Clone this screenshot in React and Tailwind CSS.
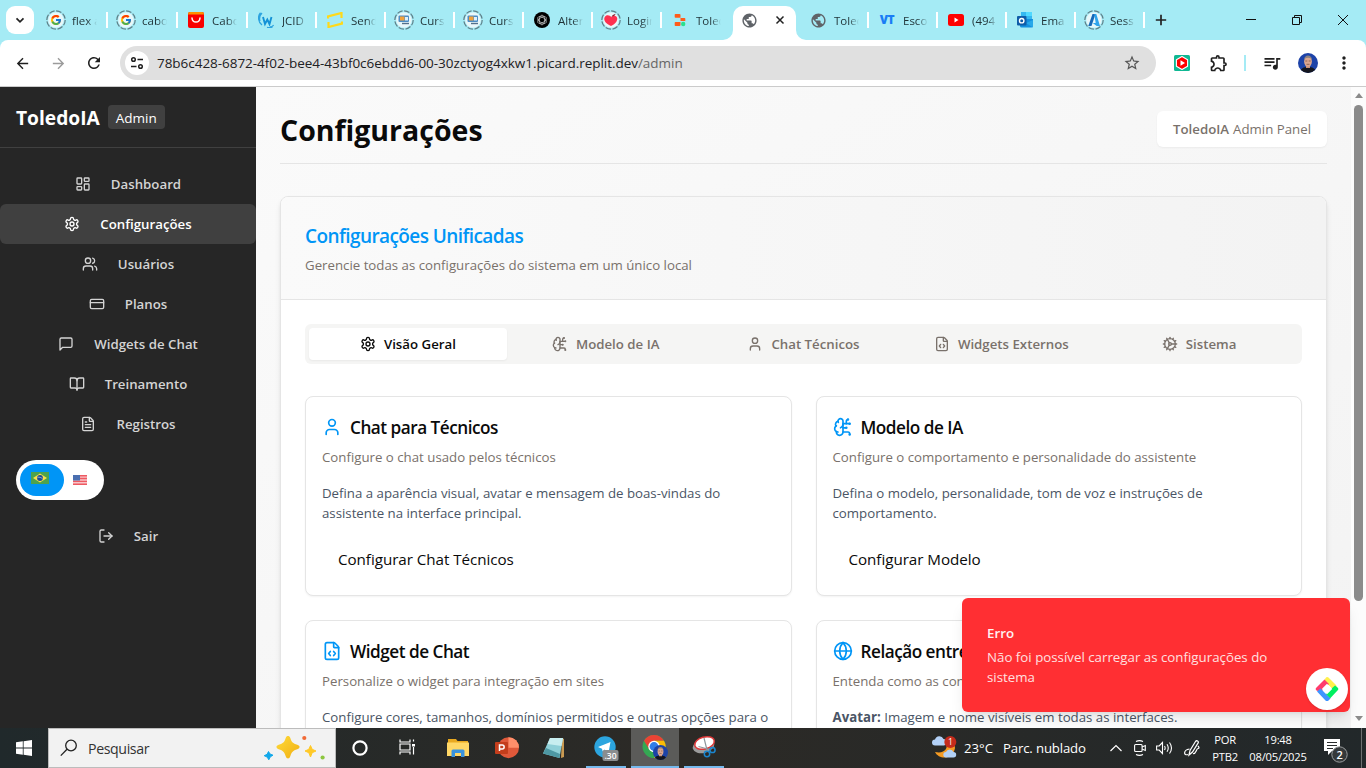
import React from "react";
import {
  LayoutDashboard, Users, CreditCard, BookOpen, FileText, LogOut,
  BrainCircuit, User, FileCode, Cog, Globe,
} from "lucide-react";
import {
  MdPublic, MdQueueMusic, MdOutlineExtension, MdRefresh, MdArrowBack,
  MdArrowForward, MdStarBorder, MdMoreVert,
} from "react-icons/md";
import { FcGoogle } from "react-icons/fc";

const UI = "font-['Open_Sans','Noto_Sans',sans-serif]";

/* ---------- icons ---------- */

function Stroke({ className = "", children }) {
  return (
    <svg viewBox="0 0 24 24" fill="none" stroke="currentColor" strokeWidth="2" strokeLinecap="round" strokeLinejoin="round" className={className}>
      {children}
    </svg>
  );
}

function Settings({ className }) {
  return (
    <Stroke className={className}>
      <path d="M12.22 2h-.44a2 2 0 0 0-2 2v.18a2 2 0 0 1-1 1.73l-.43.25a2 2 0 0 1-2 0l-.15-.08a2 2 0 0 0-2.73.73l-.22.38a2 2 0 0 0 .73 2.73l.15.1a2 2 0 0 1 1 1.72v.51a2 2 0 0 1-1 1.74l-.15.09a2 2 0 0 0-.73 2.73l.22.38a2 2 0 0 0 2.73.73l.15-.08a2 2 0 0 1 2 0l.43.25a2 2 0 0 1 1 1.73V20a2 2 0 0 0 2 2h.44a2 2 0 0 0 2-2v-.18a2 2 0 0 1 1-1.73l.43-.25a2 2 0 0 1 2 0l.15.08a2 2 0 0 0 2.73-.73l.22-.39a2 2 0 0 0-.73-2.73l-.15-.08a2 2 0 0 1-1-1.74v-.5a2 2 0 0 1 1-1.74l.15-.09a2 2 0 0 0 .73-2.73l-.22-.38a2 2 0 0 0-2.73-.73l-.15.08a2 2 0 0 1-2 0l-.43-.25a2 2 0 0 1-1-1.73V4a2 2 0 0 0-2-2z" />
      <circle cx="12" cy="12" r="3" />
    </Stroke>
  );
}

function MessageSquare({ className }) {
  return (
    <Stroke className={className}>
      <path d="M21 15a2 2 0 0 1-2 2H7l-4 4V5a2 2 0 0 1 2-2h14a2 2 0 0 1 2 2z" />
    </Stroke>
  );
}

function Ring({ children }) {
  return (
    <svg viewBox="0 0 20 20" className="size-5">
      <circle cx="10" cy="10" r="9.2" fill="none" stroke="#5f7f88" strokeWidth="1.2" strokeDasharray="5.6 1.6" />
      <circle cx="10" cy="10" r="7.8" fill="#e9f7fa" />
      {children}
    </svg>
  );
}

function GoogleTab() {
  return (
    <div className="grid size-5 place-items-center">
      <div className="col-start-1 row-start-1 size-5"><Ring /></div>
      <FcGoogle className="col-start-1 row-start-1 size-3" />
    </div>
  );
}

const CursIcon = () => (
  <Ring>
    <rect x="4.5" y="5.500" width="10.500" height="6.500" rx="1" fill="#4d8cc4" />
    <rect x="6" y="6.500" width="4.500" height="4" fill="#f3a23c" />
    <rect x="11" y="7" width="3" height="3.500" fill="#dff0fa" />
    <path d="M8 13.500h7" stroke="#54708a" strokeWidth="1.400" />
  </Ring>
);
const AliIcon = () => (
  <svg viewBox="0 0 16 16" className="size-4">
    <rect width="16" height="16" rx="2" fill="#f90000" />
    <path d="M0 2.500V2a2 2 0 0 1 2-2h12a2 2 0 0 1 2 2v.5z" fill="#ff9000" />
    <path d="M4 6c.4 5.400 7.600 5.400 8 0" fill="none" stroke="#fff" strokeWidth="1.500" strokeLinecap="round" />
  </svg>
);
const WIcon = () => (
  <svg viewBox="0 0 16 16" className="size-4">
    <path d="M4 13C0 10-.5 4 2.500.8M2 9C1 6 2 3 4 1M12 15c2 0 3-.8 3.600-2M9 15.500c2 .5 4 .2 5.500-.8" fill="none" stroke="#2ba3e0" strokeWidth="1.300" />
    <path d="M5 5 7 12l2.300-4.500L11.500 12l2-7" fill="none" stroke="#1391d6" strokeWidth="1.900" />
  </svg>
);
const SendIcon = () => (
  <svg viewBox="0 0 16 16" className="size-4">
    <path d="M1 6.500V4.500L14.500 1v5M15 9.500v2L1.500 15v-5" fill="none" stroke="#ffd91a" strokeWidth="2.200" />
  </svg>
);
const GptIcon = () => (
  <svg viewBox="0 0 16 16" className="size-4">
    <circle cx="8" cy="8" r="8" fill="#000" />
    <g fill="none" stroke="#ccc" strokeWidth=".7">
      <ellipse cx="8" cy="8" rx="2.600" ry="4.800" />
      <ellipse cx="8" cy="8" rx="2.600" ry="4.800" transform="rotate(60 8 8)" />
      <ellipse cx="8" cy="8" rx="2.600" ry="4.800" transform="rotate(120 8 8)" />
    </g>
  </svg>
);
const LogiIcon = () => (
  <Ring>
    <path d="M10 16C4.500 13.500 2.500 10.500 3.500 7.500 5 4.300 9 5 10.200 7.200 12 5 15.500 5.500 16.200 8c.5 3-2.200 6.500-6.200 8z" fill="#ff3050" />
    <path d="M10.500 6.500c1-1.500 2.500-2.500 4-2.500-.3 1.600-2 2.700-4 2.500z" fill="#8c1c2c" />
  </Ring>
);
const ReplitIcon = () => (
  <svg viewBox="0 0 16 16" className="size-4">
    <path d="M3.500 2h4a1 1 0 0 1 1 1v2.700h-5a.8.8 0 0 1-.8-.8V2.800A.8.8 0 0 1 3.500 2zM8.500 6h4a.8.8 0 0 1 .8.800v2.100h-4.800zM3.500 10h5v3a1 1 0 0 1-1 1h-4a.8.8 0 0 1-.8-.8v-2.400a.8.8 0 0 1 .8-.8z" fill="#ff5c1a" />
    <circle cx="11.200" cy="12" r="2.200" fill="#2be08e" />
  </svg>
);
const GlobeIcon = () => <MdPublic className="size-[17px] text-[#5f6368]" />;
const VtIcon = () => (
  <span className="font-['Open_Sans',sans-serif] text-[12px] font-extrabold tracking-[-0.500px] text-[#1a7df5]">VT</span>
);
const YtIcon = () => (
  <svg viewBox="0 0 16 12" className="h-3 w-4">
    <rect width="16" height="12" rx="2.500" fill="#f00" />
    <path d="M6.500 3.500 10.500 6l-4 2.500z" fill="#fff" />
  </svg>
);
const OutlookIcon = () => (
  <svg viewBox="0 0 16 16" className="size-4">
    <rect x="4" y="0" width="11" height="8" fill="#35b8f1" />
    <rect x="9" y="0" width="6" height="4" fill="#50d9ff" />
    <path d="M3 7h13v7a1.500 1.500 0 0 1-1.500 1.500H4.500A1.500 1.500 0 0 1 3 14z" fill="#1490df" />
    <path d="M16 8v7.500L9 11z" fill="#28a8ea" />
    <rect x="0" y="4" width="9.500" height="9.500" rx="1" fill="#0f5ca8" />
    <circle cx="4.700" cy="8.700" r="2.200" fill="none" stroke="#fff" strokeWidth="1.400" />
  </svg>
);
const AzureIcon = () => (
  <Ring>
    <path d="M8.500 4h3L7.500 16H4.300z" fill="#1769b8" />
    <path d="M10.300 4h2L16 16h-3.300l-4-3h3z" fill="#2fa4ec" />
  </Ring>
);

const tabs = [
  [GoogleTab, "flex a"], [GoogleTab, "cabo"], [AliIcon, "Cabo"], [WIcon, "JCID"],
  [SendIcon, "Send"], [CursIcon, "Curs"], [CursIcon, "Curs"], [GptIcon, "Alter"],
  [LogiIcon, "Login"], [ReplitIcon, "Toled"], [GlobeIcon, null], [GlobeIcon, "Toled"],
  [VtIcon, "Esco"], [YtIcon, "(494"], [OutlookIcon, "Ema"], [AzureIcon, "Sess"],
];

function Tab({ Icon, label, wide, noSep }) {
  return (
    <div className={"flex h-10 shrink-0 items-center " + (wide ? "w-[70px]" : "w-[69px]")}>
      <div className="ml-2 flex w-5 shrink-0 items-center justify-center">
        <Icon />
      </div>
      <div className="ml-1.5 w-[25px] overflow-hidden whitespace-nowrap pt-px text-[11.500px] text-[#1f3236] [mask-image:linear-gradient(to_right,black_60%,transparent)]">
        {label}
      </div>
      <div className={noSep ? "hidden" : "ml-auto h-4 w-0.5 bg-white"} />
    </div>
  );
}

function ActiveTab() {
  return (
    <div className="flex h-10 w-[69px] shrink-0 items-end">
      <svg viewBox="0 0 10 10" className="-ml-2 size-2.5 shrink-0"><path d="M10 0v10H0A10 10 0 0 0 10 0z" fill="#fff" /></svg>
      <div className="flex h-[34px] w-[63px] shrink-0 items-center rounded-t-[10px] bg-white pb-1.5">
        <MdPublic className="ml-[7.500px] size-[17px] text-[#5f6368]" />
        <svg viewBox="0 0 10 10" className="ml-[17.500px] size-2.5"><path d="M1.500 1.500l7 7M8.500 1.500l-7 7" stroke="#222" strokeWidth="1.500" /></svg>
      </div>
      <svg viewBox="0 0 10 10" className="size-2.5 shrink-0"><path d="M0 0v10h10A10 10 0 0 1 0 0z" fill="#fff" /></svg>
    </div>
  );
}

function TabStrip() {
  return (
    <div className="flex h-10 items-center bg-[#a5ebf5]">
      <div className="ml-1.5 mr-1 flex h-7 w-7 shrink-0 items-center justify-center rounded-[9px] bg-white">
        <svg viewBox="0 0 10 10" className="size-2.5"><path d="M1.500 3.300 5 6.800l3.500-3.500" fill="none" stroke="#222" strokeWidth="1.700" /></svg>
      </div>
      {tabs.map(([Icon, label], i) =>
        label ? <Tab key={i} Icon={Icon} label={label} wide={i < 3} noSep={i === 9} /> : <ActiveTab key={i} />
      )}
      <svg viewBox="0 0 12 12" className="ml-2.5 size-3 shrink-0"><path d="M6 .8v10.400M.8 6h10.400" stroke="#222" strokeWidth="1.700" /></svg>
      <div className="ml-auto flex shrink-0 items-center">
        <svg viewBox="0 0 10 10" className="mr-9 size-2.5"><path d="M0 4.500h10" stroke="#111" /></svg>
        <svg viewBox="0 0 10 10" className="mr-9 size-2.5"><path d="M.5 2.500h7v7h-7zM2.500 2.500v-2h7v7h-2" fill="none" stroke="#111" /></svg>
        <svg viewBox="0 0 10 10" className="mr-[18px] size-2.5"><path d="M0 0l10 10M10 0 0 10" stroke="#111" /></svg>
      </div>
    </div>
  );
}

function Avatar({ className }) {
  return (
    <svg viewBox="0 0 20 20" className={className}>
      <defs><clipPath id="av"><circle cx="10" cy="10" r="10" /></clipPath></defs>
      <g clipPath="url(#av)">
        <rect width="20" height="20" fill="#1d43a8" />
        <path d="M2 20c0-5 4-6 8-6s8 1 8 6z" fill="#14161f" />
        <rect x="8" y="11" width="4" height="4" fill="#c98f78" />
        <ellipse cx="10" cy="8.500" rx="3.900" ry="5.200" fill="#dba68f" />
        <path d="M6 7c0-6 8-6 8 0-1-3-7-3-8 0z" fill="#8c8380" />
        <path d="M7.300 8h2M10.700 8h2M8.500 11.300h3" stroke="#70483c" strokeWidth=".7" />
      </g>
    </svg>
  );
}

function Toolbar() {
  return (
    <div className="bg-[#a5ebf5]">
      <div className="flex h-[47px] items-center rounded-t-lg border-b border-[#cbcbcb] bg-white text-[#1f1f1f]">
        <MdArrowBack className="ml-[13.500px] size-[17px]" />
        <MdArrowForward className="ml-[19px] size-[17px] text-[#9b9b9b]" />
        <MdRefresh className="ml-[18.500px] size-[18px]" />
        <div className="ml-[17px] flex h-[34px] w-[1036px] items-center rounded-full bg-[#e0e0e0]">
          <div className="ml-[5px] flex size-6 items-center justify-center rounded-full bg-white">
            <svg viewBox="0 0 14 14" className="size-3.5" fill="none" stroke="#1f1f1f" strokeWidth="1.500">
              <circle cx="3.500" cy="3.500" r="1.800" /><path d="M7.500 3.500H13M1 10.500h5.500" /><circle cx="10.500" cy="10.500" r="1.800" />
            </svg>
          </div>
          <div className="ml-2 text-[13.500px] tracking-[-0.035px] text-[#202124]">
            78b6c428-6872-4f02-bee4-43bf0c6ebdd6-00-30zctyog4xkw1.picard.replit.dev<span className="text-[#666]">/admin</span>
          </div>
          <MdStarBorder className="ml-auto mr-[15px] size-[18px] text-[#555]" />
        </div>
        <svg viewBox="0 0 16 16" className="ml-[18px] size-4">
          <rect width="16" height="16" rx="1.500" fill="#0fb893" />
          <path d="M8 1.500 13.600 4.700v6.600L8 14.500 2.400 11.300V4.700z" fill="#f00" stroke="#fff" strokeWidth="1.100" strokeLinejoin="round" />
          <path d="M6.500 5.300 11 8l-4.500 2.700z" fill="#fff" />
        </svg>
        <MdOutlineExtension className="ml-[19px] size-5" />
        <div className="ml-[15px] h-4 w-0.5 bg-[#a5ebf5]" />
        <MdQueueMusic className="ml-[16px] size-5" />
        <Avatar className="ml-4 size-5" />
        <MdMoreVert className="ml-4 size-5" />
      </div>
    </div>
  );
}

/* ---------- sidebar ---------- */

const nav = [
  [LayoutDashboard, "Dashboard"], [Settings, "Configurações"], [Users, "Usuários"],
  [CreditCard, "Planos"], [MessageSquare, "Widgets de Chat"], [BookOpen, "Treinamento"],
  [FileText, "Registros"],
];

function NavItem({ Icon, label, active }) {
  return (
    <div className={"flex h-10 items-center justify-center rounded-md text-[13.250px] font-semibold " + (active ? "bg-[#404040] text-white" : "text-[#d4d4d4]")}>
      <Icon className="mr-5 size-4" />
      <span className="pt-0.5">{label}</span>
    </div>
  );
}

function Sidebar() {
  return (
    <aside className="flex w-64 shrink-0 flex-col bg-[#262626]">
      <div className="flex h-[61px] shrink-0 items-center border-b border-[#404040] px-4 text-white">
        <span className="pt-0.5 text-[19.200px] font-bold">ToledoIA</span>
        <span className="ml-2 flex h-6 items-center rounded bg-[#404040] px-2 pt-0.5 text-[13.500px]">Admin</span>
      </div>
      <nav className="mt-4">
        {nav.map(([Icon, label], i) => <NavItem key={label} Icon={Icon} label={label} active={i === 1} />)}
      </nav>
      <div className="ml-4 mt-4 flex h-10 w-[88px] shrink-0 items-center rounded-full bg-white px-1">
        <div className="flex h-8 w-11 items-center justify-center rounded-full bg-[#0095f6] pb-1 pr-1">
          <svg viewBox="0 0 18 12" className="h-3 w-[18px]">
            <rect width="18" height="12" fill="#4ea24e" />
            <path d="M9 1.500 16 6l-7 4.500L2 6z" fill="#ffe04a" />
            <circle cx="9" cy="6" r="2.900" fill="#1d4b94" />
            <path d="M6.500 5.300c2-.4 3.700.2 5 1.500" fill="none" stroke="#dce8f4" strokeWidth=".6" />
          </svg>
        </div>
        <svg viewBox="0 0 14 10" className="ml-[9px] h-2.5 w-3.5">
          <rect width="14" height="10" fill="#f8c4c8" />
          <path d="M0 .7h14M0 3.500h14M0 6.400h14M0 9.300h14" stroke="#ee5a62" strokeWidth="1.400" />
          <rect width="7" height="5.500" fill="#4a6fb0" />
        </svg>
      </div>
      <div className="mt-4"><NavItem Icon={LogOut} label="Sair" /></div>
    </aside>
  );
}

/* ---------- main ---------- */

const sections = [
  [Settings, "Visão Geral"], [BrainCircuit, "Modelo de IA"], [User, "Chat Técnicos"],
  [FileCode, "Widgets Externos"], [Cog, "Sistema"],
];

function Card({ Icon, title, desc, button, children }) {
  return (
    <div className="h-[200px] rounded-lg border border-[#e5e5e5] bg-white px-4 pt-4 shadow-xs">
      <div className="flex h-7 items-center text-[17.200px] font-semibold tracking-[-0.500px] text-[#0a0a0a]">
        <Icon className="mr-2 size-5 text-[#0095f6]" />
        <span className="whitespace-nowrap pt-0.5">{title}</span>
      </div>
      <div className="mt-1.5 whitespace-nowrap text-[13.260px] leading-5 text-[#79716b]">{desc}</div>
      <div className="mt-4 text-[13.260px] leading-5 text-[#4a5565]">{children}</div>
      <div className="ml-4 mt-4 flex h-10 items-center text-[15.200px] tracking-[-0.050px] text-[#0a0a0a]">{button}</div>
    </div>
  );
}

function Main() {
  return (
    <main className="h-full min-w-0 flex-1 overflow-hidden bg-linear-to-br from-[#fafafa] to-[#f3f3f3] px-6 pt-6">
      <div className="flex h-[53px] items-start justify-between border-b border-[#e5e5e5]">
        <h1 className="text-[28.500px] font-bold leading-[38px] tracking-[0px] text-[#0a0a0a]">Configurações</h1>
        <div className="flex h-9 w-[170px] items-center justify-center whitespace-nowrap rounded-md bg-white pt-0.5 text-[13.250px] text-[#79716b] shadow-xs">
          <span className="mr-1 font-semibold">ToledoIA</span>Admin Panel
        </div>
      </div>
      <div className="mt-8 h-[620px] overflow-hidden rounded-lg border border-[#e5e5e5] bg-white shadow-md">
        <div className="h-[103px] border-b border-[#e5e5e5] bg-linear-to-r from-[#fafafa] to-[#f3f3f3] px-6 pt-[23px]">
          <div className="text-[19px] font-semibold leading-8 tracking-[-0.580px] text-[#0095f6]">Configurações Unificadas</div>
          <div className="mt-[3px] text-[13.260px] leading-5 text-[#79716b]">Gerencie todas as configurações do sistema em um único local</div>
        </div>
        <div className="p-6">
          <div className="grid h-10 grid-cols-5 rounded-md bg-[#f5f5f4] p-1">
            {sections.map(([Icon, label], i) => (
              <div key={label} className={"flex items-center justify-center whitespace-nowrap rounded text-[13.250px] font-semibold " + (i === 0 ? "bg-white text-[#0a0a0a] shadow-xs" : "text-[#79716b]")}>
                <Icon className="mr-2 size-4" /><span className="pt-0.5">{label}</span>
              </div>
            ))}
          </div>
          <div className="mt-8 grid grid-cols-2 gap-6">
            <Card Icon={User} title="Chat para Técnicos" desc="Configure o chat usado pelos técnicos" button="Configurar Chat Técnicos">
              Defina a aparência visual, avatar e mensagem de boas-vindas do<br />assistente na interface principal.
            </Card>
            <Card Icon={BrainCircuit} title="Modelo de IA" desc="Configure o comportamento e personalidade do assistente" button="Configurar Modelo">
              Defina o modelo, personalidade, tom de voz e instruções de<br />comportamento.
            </Card>
            <Card Icon={FileCode} title="Widget de Chat" desc="Personalize o widget para integração em sites">
              Configure cores, tamanhos, domínios permitidos e outras opções para o
            </Card>
            <Card Icon={Globe} title="Relação entre" desc="Entenda como as con">
              <b>Avatar:</b> Imagem e nome visíveis em todas as interfaces.
            </Card>
          </div>
        </div>
      </div>
    </main>
  );
}

function Scrollbar() {
  return (
    <div className="flex h-full w-[15px] shrink-0 flex-col items-center bg-[#fcfcfc]">
      <svg viewBox="0 0 8 5" className="mt-[6px] h-[5px] w-2"><path d="M4 0l4 5H0z" fill="#8b8b8b" /></svg>
      <div className="mt-[7px] h-[496px] w-[9px] rounded-full bg-[#8b8b8b]" />
      <svg viewBox="0 0 8 5" className="mb-[7px] mt-auto h-[5px] w-2"><path d="M0 0h8L4 5z" fill="#8b8b8b" /></svg>
    </div>
  );
}

function Toast() {
  return (
    <div className="absolute bottom-4 right-4 h-[114px] w-[388px] rounded-md bg-[#ff2f33] pl-[25px] pt-[25px] text-[13.300px] leading-5 text-white shadow-lg">
      <div className="font-semibold text-[#fff2f2]">Erro</div>
      <div className="mt-1 text-[#ffe0e0]">Não foi possível carregar as configurações do<br />sistema</div>
      <div className="absolute bottom-[2px] right-[2px] flex size-[42px] items-center justify-center rounded-full bg-white shadow-sm">
        <svg viewBox="0 0 24 24" className="size-6">
          <path d="M12 0a2 2 0 0 1 1.500.6L21 8a2 2 0 0 1 0 2.600L18.500 13 9 3.500 11 .6z" fill="#fff04d" />
          <path d="M9.500 2.500 14 7 6 15 1.500 13.500a2 2 0 0 1 0-3z" fill="#ff3b6b" />
          <path d="M22.500 10.500a2 2 0 0 1 0 3L15 21.500 10.500 17 20 8.500z" fill="#00f060" />
          <path d="M5.500 11.500 15.500 21.500l-2 2a2 2 0 0 1-3 0L2 14.500z" fill="#4095ff" />
          <path d="M12 6.800 17.200 12 12 17.200 6.800 12z" fill="#fff" />
        </svg>
      </div>
    </div>
  );
}

/* ---------- taskbar ---------- */

function Task({ children, active, open }) {
  return (
    <div className={"flex h-10 w-[49.100px] shrink-0 flex-col items-center px-[0.500px] " + (active ? "bg-[#5b5b59] bg-clip-content" : "")}>
      <div className="flex flex-1 items-center justify-center">{children}</div>
      <div className={"h-0.5 " + (active ? "w-12 bg-[#76b9ed]" : open ? "w-10 bg-[#76b9ed]" : "w-10")} />
    </div>
  );
}

function Taskbar() {
  return (
    <div className="flex h-10 items-center bg-linear-to-r from-[#20292b] via-[#2c2a26] to-[#22282a] text-white">
      <div className="flex w-12 justify-center">
        <svg viewBox="0 0 16 16" className="size-4"><path d="M0 2.300 6.800 1.300v6.300H0zM7.600 1.200 16 0v7.600H7.600zM0 8.400h6.800v6.300L0 13.700zM7.600 8.400H16V16l-8.400-1.200z" fill="#fff" /></svg>
      </div>
      <div className="flex h-10 w-72 shrink-0 items-center border border-[#bcbcbc] bg-[#f2f2f2] text-[#333]">
        <svg viewBox="0 0 18 18" className="ml-[11px] size-[18px]"><circle cx="11" cy="6.500" r="5.300" fill="none" stroke="#222" strokeWidth="1.300" /><path d="M7 10.300.8 16.600" stroke="#222" strokeWidth="1.300" /></svg>
        <span className="ml-[10px] pt-0.5 text-[14.200px] tracking-[-0.400px]">Pesquisar</span>
        <svg viewBox="0 0 64 26" className="ml-auto mr-[9px] h-[26px] w-16">
          <defs><linearGradient id="sp" x1="0" y1="0" x2="1" y2="1"><stop offset="0" stopColor="#ffdb3a" /><stop offset="1" stopColor="#f0ae12" /></linearGradient></defs>
          <path d="M26 1c1 0 1.800.5 2.300 2 1.400 4.300 2.500 5.300 7 6.800 3 1 3 3.400 0 4.400-4.500 1.500-5.600 2.500-7 7-1 3-3.600 3-4.600 0-1.400-4.500-2.500-5.500-7-7-3-1-3-3.400 0-4.400 4.500-1.500 5.600-2.500 7-6.800C24.200 1.500 25 1 26 1z" fill="url(#sp)" />
          <path d="M48.500 10.500l1.700 3.800 3.800 1.700-3.800 1.700-1.700 4.300-1.700-4.300L43 16l3.800-1.700z" fill="#ffc928" stroke="#ffc928" strokeLinejoin="round" />
          <path d="M6.500 16.500l1.500 2.500 3 1.200-2.700 1.600-1.500 3-1.600-2.700-3-1.400 2.900-1.400z" fill="#12a8ea" stroke="#12a8ea" strokeLinejoin="round" />
          <circle cx="42.300" cy="3" r="2.100" fill="#f16a36" />
          <circle cx="60.600" cy="22.500" r="2.100" fill="#8cc63f" />
        </svg>
      </div>
      <div className="-ml-[0.500px] flex">
        <Task><svg viewBox="0 0 16 16" className="mt-0.5 size-4"><circle cx="8" cy="8" r="6.600" fill="none" stroke="#fff" strokeWidth="2.200" /></svg></Task>
        <Task>
          <svg viewBox="0 0 16 16" className="mr-1 size-4" fill="none" stroke="#fff" strokeWidth="1.200">
            <path d="M1 .5V3h10V.5M1 15.500V13h10v2.500M1 5h10v6H1zM14.500.5v2M14.500 8v7.500" /><path d="M13 5h3v2.500h-3z" fill="#fff" stroke="none" />
          </svg>
        </Task>
        <Task>
          <svg viewBox="0 0 22 18" className="mt-0.5 h-[18px] w-[22px]">
            <path d="M1 0h8l1.500 2H21v15H1z" fill="#e9a920" /><path d="M0 3.500h22V17H0z" fill="#ffd766" />
            <path d="M4.500 18v-6A1.500 1.500 0 0 1 6 10.500h10a1.500 1.500 0 0 1 1.500 1.500v6H14v-4H8v4z" fill="#3993dd" />
          </svg>
        </Task>
        <Task>
          <svg viewBox="0 0 24 22" className="mt-0.5 h-[22px] w-6">
            <circle cx="13.500" cy="10.700" r="10.500" fill="#e0593a" /><path d="M13.500.2A10.500 10.500 0 0 1 24 10.700H13.500z" fill="#ff8f6b" />
            <rect x="0" y="5" width="13" height="12" rx="1" fill="#c43e1c" />
            <path d="M4.500 14V8h2.700a1.900 1.900 0 0 1 0 3.900H4.500" fill="none" stroke="#fff" strokeWidth="1.500" />
          </svg>
        </Task>
        <Task>
          <svg viewBox="0 0 24 22" className="mr-1 mt-0.5 h-[22px] w-6">
            <path d="M20 1l2 1v18l-3 1z" fill="#c99a52" /><path d="M8 1h13l-3.500 20L1 16.500z" fill="#8fd0d8" />
            <path d="M8 1h13l-1.500 8L5.500 7z" fill="#c8eef0" /><path d="M4 11l14 6-.6 4L1 16.500z" fill="#4e98a4" />
          </svg>
        </Task>
        <Task open>
          <svg viewBox="0 0 26 26" className="mt-0.5 size-[26px]">
            <circle cx="12" cy="12" r="10.700" fill="#2ca5df" /><path d="M5 12 17.500 7l-2 10.500-4-3-1.800 2L9 13.700z" fill="#fff" />
            <rect x="9.500" y="15" width="16" height="11" rx="2" fill="#8a8d8f" />
            <text x="11.500" y="24" fontSize="8.500" fontWeight="600" fill="#fff" fontFamily="Open Sans">.30</text>
          </svg>
        </Task>
        <Task active>
          <div className="grid size-[26px]">
            <svg viewBox="0 0 26 26" className="col-start-1 row-start-1 size-[26px]">
              <circle cx="12" cy="12.500" r="11.500" fill="#34a853" />
              <path d="M2 6.700A11.500 11.500 0 0 1 22 6.700H12L7 15z" fill="#ea4335" />
              <path d="M12 6.700h10A11.500 11.500 0 0 1 12 24l5-8.500z" fill="#fbbc05" />
              <circle cx="12" cy="12.500" r="5.700" fill="#fff" /><circle cx="12" cy="12.500" r="4.400" fill="#2f7de8" />
            </svg>
            <Avatar className="col-start-1 row-start-1 size-[15px] self-end justify-self-end" />
          </div>
        </Task>
        <Task open>
          <svg viewBox="0 0 24 24" className="size-6">
            <ellipse cx="11.500" cy="11" rx="11" ry="7" transform="rotate(-15 11.500 11)" fill="#9c9c9c" />
            <ellipse cx="12.500" cy="8" rx="10" ry="6" transform="rotate(-15 12.500 8)" fill="#fff" stroke="#dc3838" strokeWidth="1.500" />
            <path d="M12 3l3 12M6.500 11.500l11 3" stroke="#8e979c" strokeWidth="1.200" />
            <circle cx="15" cy="19" r="2.700" fill="none" stroke="#1b86cf" strokeWidth="1.500" /><circle cx="20.500" cy="15" r="2.600" fill="none" stroke="#1b86cf" strokeWidth="1.500" />
          </svg>
        </Task>
      </div>
      <div className="ml-auto flex h-10 shrink-0 items-center whitespace-nowrap text-[13.200px]">
        <svg viewBox="0 0 25 24" className="h-6 w-[25px]">
          <path d="M14 5c3 8-2 13-11 11 4 8 18 8 20-4 0-5-4-8-9-7z" fill="#f59b23" />
          <path d="M3 9.500a3 3 0 0 1 0-6 4.500 4.500 0 0 1 8.500-.500 3.300 3.300 0 0 1 .5 6.500z" fill="#b3d1f7" />
          <path d="M14 21.500a2.700 2.700 0 0 1 0-5.400 4 4 0 0 1 7.500 0 2.700 2.700 0 0 1 0 5.400z" fill="#b3d1f7" />
          <circle cx="18.300" cy="6" r="6" fill="#c42b1c" /><text x="16" y="9" fontSize="8.500" fill="#fff" fontFamily="Open Sans">1</text>
        </svg>
        <span className="ml-[7px] w-[39px] pt-0.5">23°C</span>
        <span className="w-[84px] pt-0.5 tracking-[-0.150px]">Parc. nublado</span>
        <svg viewBox="0 0 12 8" className="ml-[23px] h-2 w-3"><path d="M.5 7 6 1.500 11.500 7" fill="none" stroke="#fff" strokeWidth="1.200" /></svg>
        <svg viewBox="0 0 12 16" className="ml-[12px] h-4 w-3" fill="none" stroke="#fff" strokeWidth="1.100"><rect x=".6" y="4.500" width="7.500" height="7" rx="1" /><path d="M8 7l3.300-1.500v5L8 9M2 1.500c2-1 5-1 7 0M2 14.500c2 1 5 1 7 0" /></svg>
        <svg viewBox="0 0 17 14" className="ml-[10px] h-3.5 w-[17px]" fill="none" stroke="#fff" strokeWidth="1.100"><path d="M.6 5h2.600L6.500 1.500v11L3.200 9H.6zM8.500 5q1.300 2 0 4M11 3.200q2.500 3.800 0 7.600M13.500 1.500q4 5.500 0 11" /></svg>
        <svg viewBox="0 0 17 17" className="ml-[11px] size-[17px]" fill="none" stroke="#fff" strokeWidth="1.200"><path d="M5 15 6 10.500 11.500 1.500a1.500 1.500 0 0 1 2.500 1.700L8.500 12zM5.500 9C-1 10-.5 16 4 14.500M9 13.500c3 1 3-4.500 5-5 1.500 0 1-2-.2-2.500" /></svg>
        <div className="ml-[10px] flex w-7 flex-col items-center text-[11.200px] leading-[17px] tracking-[-0.200px]"><span>POR</span><span>PTB2</span></div>
        <div className="ml-[9px] flex w-[60px] flex-col items-center text-[11.200px] leading-[17px] tracking-[-0.200px]"><span>19:48</span><span>08/05/2025</span></div>
        <svg viewBox="0 0 25 25" className="ml-[16px] mt-1 h-[25px] w-[25px]">
          <path d="M0 1h16v12H8l-4 4v-4H0z" fill="#fff" /><path d="M3 4.500h10M3 7.500h10M3 10.500h6" stroke="#2a2d2d" />
          <circle cx="15.500" cy="16.500" r="7.700" fill="#35393a" stroke="#9a9d9e" />
          <text x="12.400" y="20.500" fontSize="11" fontWeight="600" fill="#fff" fontFamily="Open Sans">2</text>
        </svg>
        <div className="ml-[12px] mr-1 h-10 w-px bg-[#6d7071]" />
      </div>
    </div>
  );
}

export default function App() {
  return (
    <div className={UI + " flex h-[768px] w-[1366px] flex-col overflow-hidden"}>
      <TabStrip />
      <Toolbar />
      <div className="relative flex h-[641px] shrink-0 overflow-hidden bg-white">
        <Sidebar />
        <Main />
        <Scrollbar />
        <Toast />
      </div>
      <Taskbar />
    </div>
  );
}
